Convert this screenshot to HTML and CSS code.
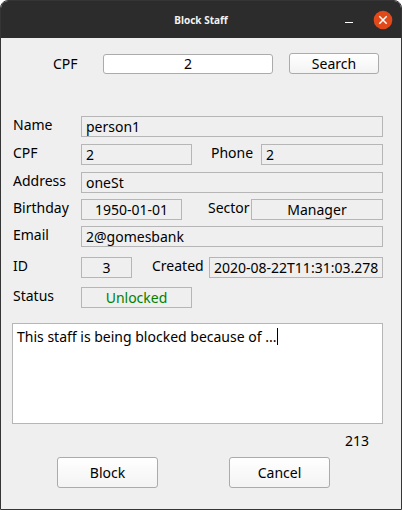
FILE: index.html
```html
<!DOCTYPE html>
<html lang="en">
<head>
<meta charset="utf-8">
<meta name="viewport" content="width=device-width, initial-scale=1">
<title>Block Staff</title>
<link rel="stylesheet" href="styles.css">
</head>
<body>
<main class="window">
  <header class="titlebar">
    <h1 class="title">Block Staff</h1>
    <div class="window-controls">
      <button class="control" type="button" aria-label="Minimize">
        <svg width="20" height="20" viewBox="0 0 20 20"><path d="M6 12.5h8" stroke="#fff" fill="none"/></svg>
      </button>
      <button class="control" type="button" aria-label="Close">
        <svg width="20" height="20" viewBox="0 0 20 20"><circle cx="10" cy="10" r="9.3" fill="#e2491a"/><path d="M6.3 6.3l7.4 7.4M13.7 6.3l-7.4 7.4" stroke="#fff" stroke-width="1.5" fill="none"/></svg>
      </button>
    </div>
  </header>
  <form class="content">
    <div class="search">
      <label for="search-cpf">CPF</label>
      <input class="search-input" id="search-cpf" type="text" value="2">
      <button class="button search-button" type="button">Search</button>
    </div>
    <div class="details">
      <div class="group">
        <div class="row">
          <label class="label" for="name">Name</label>
          <input class="field grow" id="name" type="text" value="person1" readonly>
        </div>
        <div class="row">
          <label class="label" for="cpf">CPF</label>
          <input class="field w-cpf" id="cpf" type="text" value="2" readonly>
          <label class="label-phone" for="phone">Phone</label>
          <input class="field grow" id="phone" type="text" value="2" readonly>
        </div>
        <div class="row">
          <label class="label" for="address">Address</label>
          <input class="field grow" id="address" type="text" value="oneSt" readonly>
        </div>
      </div>
      <div class="group group-tight">
        <div class="row">
          <label class="label" for="birthday">Birthday</label>
          <input class="field centered w-birthday" id="birthday" type="text" value="1950-01-01" readonly>
          <label class="label-sector" for="sector">Sector</label>
          <input class="field centered grow" id="sector" type="text" value="Manager" readonly>
        </div>
        <div class="row">
          <label class="label" for="email">Email</label>
          <input class="field grow" id="email" type="text" value="2@gomesbank" readonly>
        </div>
      </div>
      <div class="group group-loose">
        <div class="row">
          <label class="label" for="id">ID</label>
          <input class="field centered w-id" id="id" type="text" value="3" readonly>
          <label class="label-created" for="created">Created</label>
          <input class="field centered grow" id="created" type="text" value="2020-08-22T11:31:03.278" readonly>
        </div>
        <div class="row">
          <label class="label" for="status">Status</label>
          <input class="field centered w-cpf unlocked" id="status" type="text" value="Unlocked" readonly>
        </div>
      </div>
    </div>
    <div class="reason">
      <textarea class="reason-input" aria-label="Reason for blocking">This staff is being blocked because of ...</textarea>
      <span class="caret"></span>
    </div>
    <output class="counter">213</output>
    <div class="actions">
      <button class="button action" type="button">Block</button>
      <button class="button action" type="button">Cancel</button>
    </div>
  </form>
</main>
</body>
</html>
```
FILE: styles.css
```css
* {
  box-sizing: border-box;
}

body {
  margin: 0;
  background: #fff;
  color: #000;
  font: 14px/20px "Noto Sans", sans-serif;
}

input,
button,
textarea {
  margin: 0;
  color: inherit;
  font: inherit;
}

.window {
  display: flex;
  flex-direction: column;
  min-height: 100vh;
  overflow: hidden;
  border: 1px solid #353535;
  border-radius: 8px 8px 0 0;
  background: #efefef;
}

.titlebar {
  display: grid;
  grid-template-columns: 1fr auto 1fr;
  align-items: center;
  height: 37px;
  padding-right: 8px;
  background: #2c2c2c;
  color: #f2f2f2;
}

.title {
  grid-column: 2;
  margin: 0 0 0 8px;
  font-size: 10px;
  line-height: 16px;
}

.window-controls {
  display: flex;
  justify-content: flex-end;
  gap: 14px;
}

.control {
  width: 20px;
  height: 20px;
  padding: 0;
  border: 0;
  background: none;
}

.control svg {
  display: block;
}

.content {
  padding: 15px 18px 20px 11px;
}

.search {
  display: flex;
  align-items: center;
  padding: 0 4px 0 41px;
}

.search label {
  width: 50px;
}

.search-input {
  flex: 1;
  min-width: 0;
  height: 20px;
  border: 1px solid #ababab;
  border-radius: 3px;
  background: #fff;
  text-align: center;
}

.button {
  padding: 0;
  border: 1px solid #ababab;
  border-radius: 3px;
  background: linear-gradient(#fff, #f3f3f3);
}

.search-button {
  width: 90px;
  height: 21px;
  margin-left: 16px;
  line-height: 19px;
}

.details {
  display: flex;
  flex-direction: column;
  margin-top: 42px;
  padding-left: 1px;
}

.group {
  display: flex;
  flex-direction: column;
  gap: 7px;
}

.group-tight {
  gap: 6px;
  margin-top: 6px;
}

.group-loose {
  gap: 9px;
  margin-top: 10px;
}

.row {
  display: flex;
}

.row label {
  flex: none;
  line-height: 18px;
}

.label {
  width: 68px;
}

.label-phone {
  width: 50px;
  margin-left: 19px;
}

.label-sector {
  width: 43px;
  margin-left: 26px;
}

.label-created {
  width: 57px;
  margin-left: 20px;
}

.field {
  height: 21px;
  min-width: 0;
  padding: 0 4px;
  border: 1px solid #b6b6b6;
  background: #efefef;
}

.grow {
  flex: 1;
}

.centered {
  text-align: center;
}

.w-cpf {
  width: 111px;
}

.w-birthday {
  width: 101px;
}

.w-id {
  width: 51px;
}

.unlocked {
  color: #008000;
}

.reason {
  position: relative;
  margin-top: 15px;
}

.reason-input {
  display: block;
  width: 100%;
  height: 101px;
  padding: 3px 4px;
  border: 1px solid #b6b6b6;
  background: #fff;
  resize: none;
}

.caret {
  position: absolute;
  top: 5px;
  left: 265px;
  width: 1px;
  height: 17px;
  background: #000;
}

.counter {
  display: block;
  margin-top: 7px;
  padding-right: 14px;
  text-align: right;
}

.actions {
  display: flex;
  justify-content: space-between;
  margin-top: 6px;
  padding: 0 53px 0 45px;
}

.action {
  width: 101px;
  height: 31px;
}
```
